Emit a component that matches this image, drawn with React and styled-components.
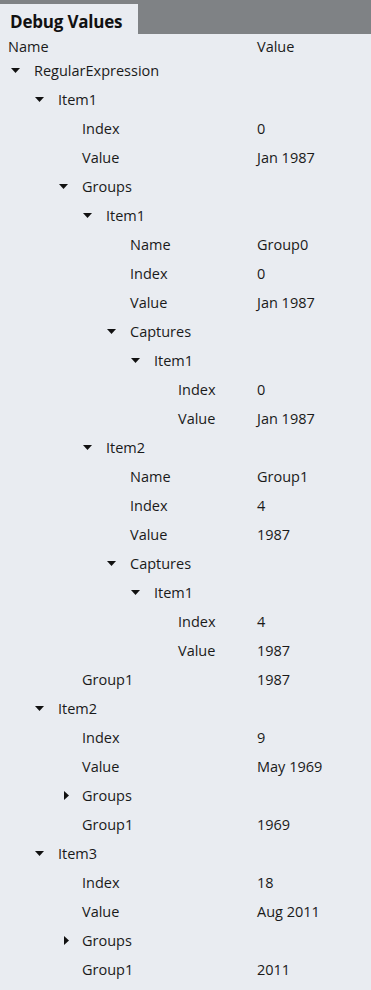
import React from "react";
import styled, { createGlobalStyle } from "styled-components";

const Global = createGlobalStyle`
  html, body { margin: 0; padding: 0; background: #e9ecf1; }
  body { font-family: "Open Sans", "Noto Sans", sans-serif; color: #111; }
`;

const Panel = styled.div`
  width: 371px;
  height: 990px;
  background: #e9ecf1;
  display: flex;
  flex-direction: column;
  overflow: hidden;
`;

const TabBar = styled.div`
  height: 34px;
  background: #7f8285;
  display: flex;
  align-items: flex-end;
`;

const Tab = styled.div`
  height: 30px;
  width: 138px;
  background: #e9ecf1;
  box-sizing: border-box;
  padding: 4px 0 0 10px;
  display: flex;
  align-items: center;
  font-size: 17px;
  font-weight: 700;
  color: #111;
  letter-spacing: -0.2px;
`;

const HeaderRow = styled.div`
  height: 22px;
  box-sizing: border-box;
  padding: 2px 0 0 8px;
  display: grid;
  grid-template-columns: 249px 1fr;
  align-items: center;
  font-size: 14.5px;
  color: #1a1a1a;
`;

const Row = styled.div`
  height: 29px;
  display: grid;
  grid-template-columns: 257px 1fr;
  align-items: center;
  font-size: 14.5px;
  color: #1a1a1a;
`;

const NameCell = styled.div`
  display: flex;
  align-items: center;
  padding-left: ${(p) => 10 + p.$level * 24}px;
`;

const Toggle = styled.span`
  width: 24px;
  height: 29px;
  display: flex;
  align-items: center;
  justify-content: ${(p) => (p.$open ? "flex-start" : "center")};
  padding-left: ${(p) => (p.$open ? "1px" : "0")};
  box-sizing: border-box;
  flex: none;
`;

const Caret = ({ open }) =>
  open ? (
    <svg width="9" height="5" viewBox="0 0 9 5">
      <polygon points="0,0 9,0 4.5,5" fill="#111" />
    </svg>
  ) : (
    <svg width="5" height="9" viewBox="0 0 5 9" style={{ marginRight: 7 }}>
      <polygon points="0,0 5,4.5 0,9" fill="#111" />
    </svg>
  );

const rows = [
  [0, "RegularExpression", "", "open"],
  [1, "Item1", "", "open"],
  [2, "Index", "0"],
  [2, "Value", "Jan 1987"],
  [2, "Groups", "", "open"],
  [3, "Item1", "", "open"],
  [4, "Name", "Group0"],
  [4, "Index", "0"],
  [4, "Value", "Jan 1987"],
  [4, "Captures", "", "open"],
  [5, "Item1", "", "open"],
  [6, "Index", "0"],
  [6, "Value", "Jan 1987"],
  [3, "Item2", "", "open"],
  [4, "Name", "Group1"],
  [4, "Index", "4"],
  [4, "Value", "1987"],
  [4, "Captures", "", "open"],
  [5, "Item1", "", "open"],
  [6, "Index", "4"],
  [6, "Value", "1987"],
  [2, "Group1", "1987"],
  [1, "Item2", "", "open"],
  [2, "Index", "9"],
  [2, "Value", "May 1969"],
  [2, "Groups", "", "closed"],
  [2, "Group1", "1969"],
  [1, "Item3", "", "open"],
  [2, "Index", "18"],
  [2, "Value", "Aug 2011"],
  [2, "Groups", "", "closed"],
  [2, "Group1", "2011"],
];

export default function App() {
  return (
    <Panel>
      <Global />
      <TabBar>
        <Tab>Debug Values</Tab>
      </TabBar>
      <HeaderRow>
        <span>Name</span>
        <span>Value</span>
      </HeaderRow>
      {rows.map(([level, name, value, state], i) => {
        const hasToggle = state === "open" || state === "closed";
        return (
          <Row key={i}>
            <NameCell $level={level}>
              {hasToggle ? (
                <Toggle $open={state === "open"}>
                  <Caret open={state === "open"} />
                </Toggle>
              ) : (
                <Toggle />
              )}
              <span>{name}</span>
            </NameCell>
            <span>{value}</span>
          </Row>
        );
      })}
    </Panel>
  );
}
